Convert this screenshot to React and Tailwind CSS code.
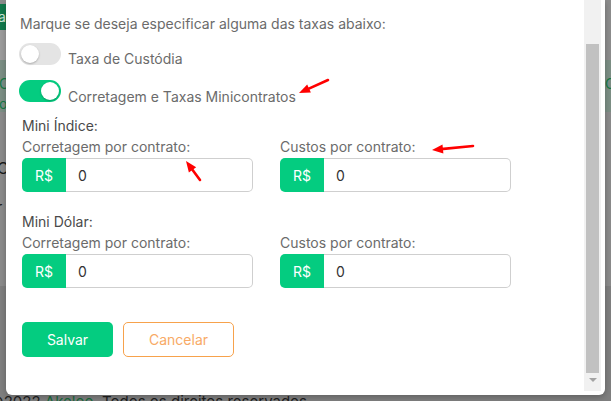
import React from "react";

const font = { fontFamily: "Inter, 'Noto Sans', sans-serif" };

function Arrow({ t, h }) {
  const dx = h[0] - t[0];
  const dy = h[1] - t[1];
  const len = Math.hypot(dx, dy);
  const ux = dx / len;
  const uy = dy / len;
  const L = 11;
  const W = 4.5;
  const bx = h[0] - ux * L;
  const by = h[1] - uy * L;
  const nx = -uy;
  const ny = ux;
  const pts = `${h[0]},${h[1]} ${bx + nx * W},${by + ny * W} ${bx - nx * W},${by - ny * W}`;
  return (
    <g>
      <line x1={t[0]} y1={t[1]} x2={bx + ux * 2} y2={by + uy * 2} stroke="#ff0000" strokeWidth="2.6" strokeLinecap="round" />
      <polygon points={pts} fill="#ff0000" />
    </g>
  );
}

function Toggle({ on }) {
  return (
    <div
      className={
        "relative w-[42px] h-[22px] rounded-full shrink-0 " +
        (on ? "bg-[#04cc80]" : "bg-[#e4e4e4]")
      }
    >
      <div
        className={
          "absolute top-[2px] w-[18px] h-[18px] rounded-full bg-white shadow-[0_1px_2px_rgba(0,0,0,0.25)] " +
          (on ? "right-[2px]" : "left-[2px]")
        }
      />
    </div>
  );
}

function Field({ label }) {
  return (
    <div className="flex flex-col">
      <div className="text-[14px] leading-5 text-[#6b6b6b]">{label}</div>
      <div className="mt-[1px] flex h-[34px]">
        <div className="w-[44px] shrink-0 bg-[#04cc80] rounded-l-[5px] flex items-center justify-center text-white text-[14px]">
          R$
        </div>
        <div className="flex-1 border border-l-0 border-[#cfcfcf] rounded-r-[5px] flex items-center pl-[12px] text-[14px] text-[#333]">
          0
        </div>
      </div>
    </div>
  );
}

function Section({ title }) {
  return (
    <div className="pl-[2px]">
      <div className="text-[14px] leading-5 text-[#4a4a4a]">{title}</div>
      <div className="mt-[1px] grid grid-cols-[231px_231px] gap-x-[27px]">
        <Field label="Corretagem por contrato:" />
        <Field label="Custos por contrato:" />
      </div>
    </div>
  );
}

export default function App() {
  return (
    <div className="relative w-[611px] h-[401px] overflow-hidden bg-[#8b8b8b]" style={font}>
      {/* background page (behind overlay) */}
      <div className="flex flex-col w-full">
        <div className="h-[60px] flex bg-[#8d8d8d]">
          <div className="w-[6px] flex flex-col">
            <div className="h-[4px]" />
            <div className="h-[26px] bg-[#127a4c] overflow-hidden text-[#cfe8da] text-[14px] leading-[26px] whitespace-nowrap -indent-[2px]">
              ar
            </div>
            <div className="flex-1 bg-[#9c9c9c]" />
          </div>
        </div>
        <div className="h-[52px] bg-[#7c8f85] flex justify-between text-[#157a45] text-[14px]">
          <div className="w-[6px] overflow-hidden whitespace-nowrap pt-[14px] leading-5">
            <div className="-ml-[1px]">C</div>
            <div className="-ml-[1px]">oc</div>
          </div>
          <div className="w-[6px] overflow-hidden whitespace-nowrap pt-[14px] leading-5">
            <div>C</div>
          </div>
        </div>
        <div className="h-[174px] bg-[#8b8b8b] text-[#1c1c1c] text-[16px]">
          <div className="w-[6px] overflow-hidden whitespace-nowrap">
            <div className="mt-[44px] -ml-[3px]">C</div>
            <div className="mt-[16px] -ml-[3px] text-[14px]">r</div>
          </div>
        </div>
        <div className="h-[115px] bg-[#7f7f7f] flex flex-col justify-end">
          <div className="whitespace-nowrap text-[15px] leading-5 text-[#1f1f1f] -ml-[10px] translate-y-[11px]">
            ©2022 <span className="text-[#1a6b3d]">Akeloo</span>. Todos os direitos reservados.
          </div>
        </div>
      </div>

      {/* modal */}
      <div className="absolute left-[6px] top-0 w-[599px] h-[395px] bg-white rounded-b-[6px] shadow-[0_2px_6px_rgba(0,0,0,0.25)] flex">
        <div className="flex-1 pl-[14px] pt-[14px]">
          <div className="text-[14px] leading-5 text-[#6b6b6b]">
            Marque se deseja especificar alguma das taxas abaixo:
          </div>
          <div className="mt-[9px] flex items-start -ml-[1px]">
            <Toggle on={false} />
            <div className="ml-[7px] mt-[6px] text-[14px] leading-5 text-[#6b6b6b]">Taxa de Custódia</div>
          </div>
          <div className="mt-[11px] flex items-start -ml-[1px]">
            <Toggle on={true} />
            <div className="ml-[7px] mt-[7px] text-[14px] leading-5 text-[#6b6b6b]">
              Corretagem e Taxas Minicontratos
            </div>
          </div>
          <div className="mt-[9px]">
            <Section title="Mini Índice:" />
          </div>
          <div className="mt-[20px]">
            <Section title="Mini Dólar:" />
          </div>
          <div className="mt-[34px] pl-[2px] flex gap-[10px]">
            <button className="w-[91px] h-[35px] rounded-[5px] bg-[#04cc80] text-white text-[14px]">Salvar</button>
            <button className="w-[111px] h-[35px] rounded-[5px] border border-[#f7a24c] text-[#f8aa66] text-[14px] bg-white">
              Cancelar
            </button>
          </div>
        </div>
        <div className="w-[17px] mr-[4px] mb-[4px] bg-[#f1f1f1] flex flex-col items-center">
          <div className="mt-[44px] w-[13px] h-[329px] bg-[#c1c1c1]" />
          <div className="mt-[5px] w-0 h-0 border-l-[4px] border-r-[4px] border-t-[4px] border-l-transparent border-r-transparent border-t-[#a3a3a3]" />
        </div>
      </div>

      {/* red annotation arrows */}
      <svg className="absolute left-0 top-0 pointer-events-none" width="611" height="401">
        <Arrow t={[328, 80]} h={[299, 93]} />
        <Arrow t={[200, 180]} h={[186, 161]} />
        <Arrow t={[473, 146]} h={[432, 150]} />
      </svg>
    </div>
  );
}
